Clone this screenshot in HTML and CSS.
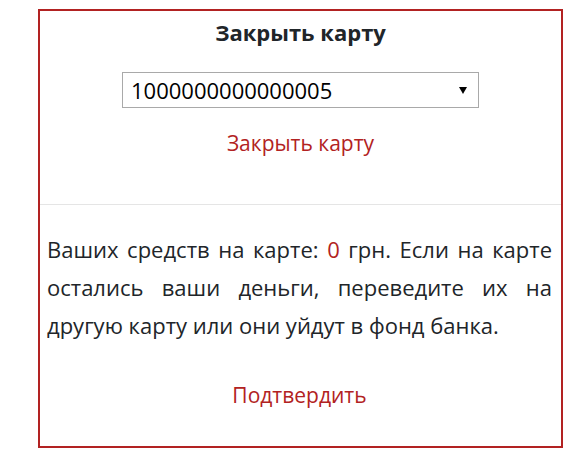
FILE: index.html
```html
<!DOCTYPE html>
<html lang="ru">
<head>
<meta charset="utf-8">
<title>Закрыть карту</title>
<link rel="stylesheet" href="styles.css">
</head>
<body>
<div class="card">
  <div class="top">
    <h2 class="title">Закрыть карту</h2>
    <div class="select-wrap">
      <select class="card-select">
        <option>1000000000000005</option>
      </select>
    </div>
    <a class="link" href="#">Закрыть карту</a>
  </div>
  <div class="bottom">
    <p class="text">Ваших средств на карте: <span class="sum">0</span> грн. Если на карте остались ваши деньги, переведите их на другую карту или они уйдут в фонд банка.</p>
    <a class="link confirm" href="#">Подтвердить</a>
  </div>
</div>
</body>
</html>
```
FILE: styles.css
```css
html, body {
  margin: 0;
  padding: 0;
  background: #fff;
}
body {
  font-family: "Open Sans", "Noto Sans", sans-serif;
  color: #212529;
}
.card {
  box-sizing: border-box;
  width: 525px;
  height: 439px;
  margin: 9px 0 0 38px;
  border: 2px solid #b22222;
  display: flex;
  flex-direction: column;
}
.top {
  display: flex;
  flex-direction: column;
  align-items: center;
  padding-top: 6px;
  height: 194px;
  box-sizing: border-box;
  border-bottom: 1px solid #e5e5e5;
}
.title {
  margin: 0;
  font-size: 22px;
  line-height: 30px;
  font-weight: 700;
}
.select-wrap {
  position: relative;
  margin-top: 25px;
}
.select-wrap::after {
  content: "";
  position: absolute;
  right: 12px;
  top: 15px;
  border-left: 4px solid transparent;
  border-right: 4px solid transparent;
  border-top: 7px solid #000;
  pointer-events: none;
}
.card-select {
  -webkit-appearance: none;
  appearance: none;
  box-sizing: border-box;
  width: 357px;
  height: 36px;
  padding: 0 8px;
  border: 1px solid #a9a9a9;
  border-radius: 0;
  background: #fff;
  font-family: "Open Sans", "Noto Sans", sans-serif;
  font-size: 22px;
  color: #000;
}
.link {
  color: #b22222;
  text-decoration: none;
  font-size: 21px;
  line-height: 28px;
  margin-top: 21px;
}
.bottom {
  display: flex;
  flex-direction: column;
  align-items: center;
  padding: 25px 9px 0 7px;
}
.text {
  margin: 0;
  align-self: stretch;
  font-size: 22px;
  line-height: 38px;
  text-align: justify;
}
.sum {
  color: #b22222;
}
.confirm {
  margin-top: 37px;
}
```
